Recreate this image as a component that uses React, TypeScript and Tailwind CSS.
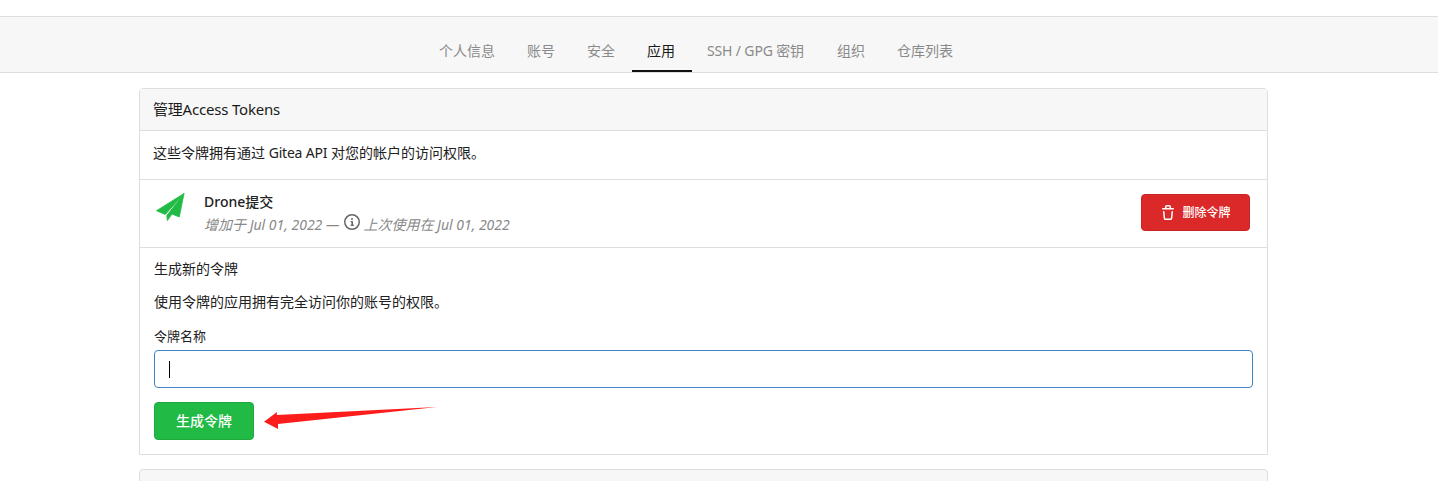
const tabs = [
  { name: "个人信息", cls: "px-4 border-transparent text-[#8a8a8a]" },
  { name: "账号", cls: "px-4 border-transparent text-[#8a8a8a]" },
  { name: "安全", cls: "px-4 border-transparent text-[#8a8a8a]" },
  { name: "应用", cls: "ml-px pl-[15px] pr-[17px] border-[#111] text-[#1a1a1a]" },
  { name: "SSH / GPG 密钥", cls: "pl-[15px] pr-[17px] border-transparent text-[#8a8a8a] tracking-[-0.15px]" },
  { name: "组织", cls: "px-4 border-transparent text-[#8a8a8a]" },
  { name: "仓库列表", cls: "px-4 border-transparent text-[#8a8a8a]" },
];

const TrashIcon = () => (
  <svg viewBox="0 0 16 16" width="16" height="16" fill="currentColor">
    <path
      fillRule="evenodd"
      d="M6.5 1.75a.25.25 0 01.25-.25h2.5a.25.25 0 01.25.25V3h-3V1.75zm4.5 0V3h2.25a.75.75 0 010 1.5H2.75a.75.75 0 010-1.5H5V1.75C5 .784 5.784 0 6.75 0h2.5C10.216 0 11 .784 11 1.75zM4.496 6.675a.75.75 0 10-1.492.15l.66 6.6A1.75 1.75 0 005.405 15h5.19c.9 0 1.652-.681 1.741-1.576l.66-6.6a.75.75 0 00-1.492-.15l-.66 6.6a.25.25 0 01-.249.225h-5.19a.25.25 0 01-.249-.225l-.66-6.6z"
    />
  </svg>
);

const InfoIcon = () => (
  <svg viewBox="0 0 16 16" width="16" height="16" fill="currentColor" className="block">
    <path
      fillRule="evenodd"
      d="M8 1.5a6.5 6.5 0 100 13 6.5 6.5 0 000-13zM0 8a8 8 0 1116 0A8 8 0 010 8zm6.5-.25A.75.75 0 017.25 7h1a.75.75 0 01.75.75v2.75h.25a.75.75 0 010 1.5h-2a.75.75 0 010-1.5h.25v-2h-.25a.75.75 0 01-.75-.75zM8 6a1 1 0 100-2 1 1 0 000 2z"
    />
  </svg>
);

const PlaneIcon = () => (
  <svg
    viewBox="0 0 32 32"
    width="32"
    height="32"
    fill="#21ba45"
    stroke="#21ba45"
    strokeWidth="0.8"
    strokeLinejoin="round"
    className="mb-[12px] shrink-0"
  >
    <path d="M1.5 18.7 L29 1.5 L10.3 22.5 Z" />
    <path d="M29 1.5 L24.3 25 L17 22 L12.4 28.6 L11.8 23.5 Z" />
  </svg>
);

const Arrow = () => (
  <svg
    viewBox="0 0 180 30"
    width="180"
    height="30"
    fill="#fc1c1c"
    className="absolute left-[262px] top-[404px]"
  >
    <path d="M2 17.7 L15 8 L14.7 11 L175 3 L16 20 L16 25 Z" />
  </svg>
);

export default function App() {
  return (
    <div
      lang="zh-CN"
      className="relative h-[481px] overflow-hidden bg-white text-sm text-[#212121]"
      style={{ fontFamily: '"Noto Sans", "Noto Sans CJK SC", sans-serif' }}
    >
      {/* Tabs */}
      <div className="mt-4 flex h-[57px] justify-center border-y border-[#dedede] bg-[#f7f7f7] pr-[46px]">
        {tabs.map((tab) => (
          <div key={tab.name} className={"mt-[14px] flex h-[41px] items-center border-b-2 " + tab.cls}>
            {tab.name}
          </div>
        ))}
      </div>

      <div className="ml-[139px] mt-[15px] w-[1129px]">
        {/* Access tokens card */}
        <div className="rounded-t border border-[#dedede]">
          <div className="flex h-[42px] items-center border-b border-[#dedede] bg-[#f7f7f7] px-[13px] text-[15px] tracking-[-0.2px] text-[#1a1a1a]">
            管理Access Tokens
          </div>
          <div className="flex h-[49px] items-center whitespace-pre border-b border-[#dedede] px-[13px] pb-[4px]">
            这些令牌拥有通过 <span className="tracking-[-0.2px]">Gitea API</span> 对您的帐户的访问权限。
          </div>

          <div className="flex h-[68px] items-center border-b border-[#dedede] pl-[15px] pr-[17px]">
            <PlaneIcon />
            <div className="ml-[17px] flex-1">
              <div className="font-medium leading-5">Drone提交</div>
              <div className="mt-[3px] flex h-5 items-center italic text-[#888]">
                <span>增加于 Jul 01, 2022 —</span>
                <span className="mb-[7px] ml-[5px] mr-[3px] text-[#666]">
                  <InfoIcon />
                </span>
                <span>上次使用在 Jul 01, 2022</span>
              </div>
            </div>
            <button className="mb-[2px] flex h-[37px] w-[109px] items-center justify-center gap-[6px] rounded border border-[#c92424] bg-[#db2828] text-xs font-medium text-white">
              <TrashIcon />
              删除令牌
            </button>
          </div>

          <div className="h-[206px] px-[14px] pt-[11px]">
            <div className="leading-5">生成新的令牌</div>
            <div className="mt-[13px] leading-5">使用令牌的应用拥有完全访问你的账号的权限。</div>
            <div className="mt-[14px] text-[13px] leading-5">令牌名称</div>
            <div className="mt-[4px] flex h-[38px] items-center rounded border border-[#3d85c6] pl-[14px]">
              <span className="h-[17px] w-px bg-black" />
            </div>
            <button className="mt-[14px] h-[38px] w-[100px] rounded border border-[#1eaa3f] bg-[#21ba45] font-medium text-white">
              生成令牌
            </button>
          </div>
        </div>

        {/* Next card, cut off by the window */}
        <div className="mt-[14px] h-[40px] rounded-t border border-[#dedede] bg-[#f7f7f7]" />
      </div>

      <Arrow />
    </div>
  );
}
